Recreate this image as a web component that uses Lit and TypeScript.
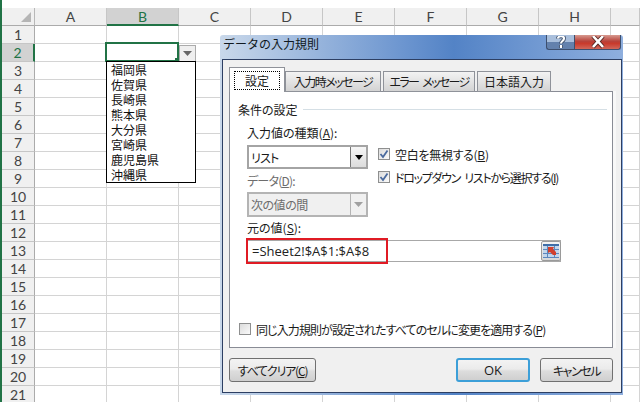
import { LitElement, html, css } from "lit";
import { customElement } from "lit/decorators.js";

const COLS = ["A", "B", "C", "D", "E", "F", "G", "H", ""];
const ROWS = Array.from({ length: 21 }, (_, i) => i + 1);
const ITEMS = ["福岡県", "佐賀県", "長崎県", "熊本県", "大分県", "宮崎県", "鹿児島県", "沖縄県"];

@customElement("app-root")
export class AppRoot extends LitElement {
  static styles = css`
    :host {
      display: block;
      position: relative;
      width: 640px;
      height: 402px;
      overflow: hidden;
      background: #fff;
      font-family: "Noto Sans CJK JP", "Noto Sans", sans-serif;
      font-size: 12px;
      font-feature-settings: "palt";
      color: #1a1a1a;
    }
    .sheet {
      display: grid;
      grid-template-columns: 33px repeat(8, 72px) 1fr;
      grid-auto-rows: 18px;
      margin-top: 8px;
      margin-left: 2px;
    }
    .strip { position: absolute; left: 0; top: 0; bottom: 0; width: 2px; background: #217346; }
    .corner { background: #f0f0f0; border-right: 1px solid #b8b8b8; border-bottom: 1px solid #ababab; position: relative; box-sizing: border-box; }
    .corner svg { position: absolute; left: 19px; top: 4px; }
    .ch {
      background: #f0f0f0; border-right: 1px solid #c6c6c6; border-bottom: 1px solid #ababab;
      box-sizing: border-box; display: flex; align-items: center; justify-content: center;
      font: 14px Lato, sans-serif; color: #444;
    }
    .ch.sel { background: #d2d2d2; color: #217346; border-bottom: 2px solid #217346; }
    .rh {
      background: #f0f0f0; border-right: 1px solid #ababab; border-bottom: 1px solid #c6c6c6;
      box-sizing: border-box; display: flex; align-items: center; justify-content: center;
      font: 14px Lato, sans-serif; color: #444;
    }
    .rh.sel { background: #d2d2d2; color: #217346; border-right: 2px solid #217346; }
    .c { border-right: 1px solid #d4d4d4; border-bottom: 1px solid #d4d4d4; box-sizing: border-box; }

    .cell-sel { position: absolute; left: 105px; top: 42px; width: 74px; height: 20px; box-sizing: border-box; border: 2px solid #217346; }
    .handle { position: absolute; right: -2px; bottom: -2px; width: 4px; height: 4px; background: #217346; }
    .dd { position: absolute; left: 179px; top: 45px; width: 17px; height: 17px; box-sizing: border-box; background: #efefef; border: 1px solid #ababab; display: flex; align-items: center; justify-content: center; }
    .list { position: absolute; left: 106px; top: 61px; width: 90px; height: 122px; box-sizing: border-box; border: 1px solid #000; background: #fff; padding: 0 0 0 4px; color: #111; }
    .list div { height: 15px; line-height: 15px; font-size: 12px; }

    .dialog {
      position: absolute; left: 220px; top: 35px; width: 403px; height: 360px; box-sizing: border-box;
      padding: 0 1px 2px 2px; border-radius: 3px 3px 0 0;
      background: linear-gradient(90deg, #c9d8ea 0%, #6d96d0 45%, #5383c6 58%, #8fafde 100%);
      display: flex; flex-direction: column;
    }
    .titlebar { height: 24px; flex: none; display: flex; align-items: flex-start; justify-content: space-between; }
    .title { font-size: 12px; line-height: 18px; margin-left: 1px; color: #101820; font-feature-settings: normal; }
    .caps { display: flex; margin-right: 1px; }
    .cap { height: 15px; box-sizing: border-box; border: 1px solid #3d4f6e; border-top: 0; display: flex; align-items: center; justify-content: center; overflow: hidden; }
    .help { width: 28px; border-radius: 0 0 0 3px; background: linear-gradient(#a9bfdc 0 50%, #6381ad 50% 100%); border-right: 0; }
    .close { width: 47px; border-radius: 0 0 3px 0; background: linear-gradient(#d79a90 0, #b8423a 45%, #c93a2c 60%, #d0675a 100%); }

    .body { flex: 1; border: 1px solid #2d3f63; background: #f0f0f0; padding: 8px 0 0 6px; display: flex; flex-direction: column; box-sizing: border-box; }
    .tabs { display: flex; height: 24px; align-items: flex-end; position: relative; z-index: 1; margin-bottom: -1px; }
    .tab {
      height: 21px; box-sizing: border-box; border: 1px solid #8f9299; white-space: nowrap; letter-spacing: -1.5px;
      background: linear-gradient(#f3f3f3, #d3d3d3); display: flex; align-items: center; justify-content: center; font-size: 12px;
    }
    .tab.on { height: 25px; background: #fff; border-bottom: 0; width: 56px; padding-top: 1px; letter-spacing: 0; }
    .focus { border: 1px dotted #000; width: 46px; height: 19px; box-sizing: border-box; display: flex; align-items: center; justify-content: center; }
    .t2 { width: 96px; } .t3 { width: 92px; margin-left: 2px; letter-spacing: -1.7px; word-spacing: 3px; } .t4 { width: 74px; margin-left: 2px; letter-spacing: 0; }
    .panel {
      width: 384px; height: 257px; box-sizing: border-box; border: 1px solid #898c95; background: #fff;
      box-shadow: 3px 0 0 #f8f8f8;
      padding: 10px 5px 11px 8px; display: flex; flex-direction: column;
    }
    .legend { display: flex; align-items: center; height: 14px; gap: 5px; flex: none; }
    .legend i { flex: 1; height: 1px; background: #d5dfe5; }
    .indent { padding-left: 9px; }
    .lbl { height: 16px; line-height: 16px; flex: none; }
    .lbl.first { margin-top: 9px; }
    .two { display: flex; gap: 10px; margin-top: 4px; flex: none; }
    .left { width: 121px; display: flex; flex-direction: column; }
    .right { display: flex; flex-direction: column; gap: 9px; padding-top: 2px; }
    .sel-box { height: 24px; box-sizing: border-box; border: 2px solid #a4a4a4; display: flex; align-items: center; justify-content: space-between; padding-left: 2px; background: #fff; letter-spacing: -0.8px; }
    .sel-box.dis { background: #f0f0f0; color: #6d6d6d; margin-top: 3px; height: 25px; border-color: #b4b4b4; letter-spacing: -0.5px; }
    .arrow { width: 16px; align-self: stretch; box-sizing: border-box; background: linear-gradient(#f6f6f6, #dcdcdc); border-left: 1px solid #777; display: flex; align-items: center; justify-content: center; }
    .dis .arrow { border-left-color: #b4b4b4; background: #f0f0f0; }
    .gray { color: #6d6d6d; margin-top: 4px; letter-spacing: -0.8px; }
    .check { display: flex; align-items: center; gap: 5px; height: 14px; white-space: nowrap; flex: none; }
    .box { width: 12px; height: 12px; box-sizing: border-box; border: 1px solid #8e8f8f; background: linear-gradient(135deg, #dcdcdc, #fafafa); display: flex; align-items: center; justify-content: center; flex: none; }
    .tight-s { letter-spacing: -0.3px; }
    .tight-l { letter-spacing: -1.3px; word-spacing: 3px; }
    .tight-m { letter-spacing: -0.9px; }
    .bottom-check { margin-top: auto; margin-left: 1px; }
    .src-lbl { margin-top: 3px; }
    .input {
      position: relative; width: 314px; height: 22px; margin-top: 4px; box-sizing: border-box; border: 1px solid #a8a8a8; display: flex; align-items: center;
      justify-content: space-between; padding-left: 4px; font: 13px "Open Sans", sans-serif; color: #222; background: #fff;
    }
    .red { position: absolute; left: -2px; top: -3px; width: 142px; height: 26px; box-sizing: border-box; border: 2px solid #e01b24; }
    .ref { width: 20px; height: 20px; box-sizing: border-box; border: 1px solid #9a9a9a; border-radius: 2px; background: linear-gradient(#f4f4f4, #d8d8d8); display: flex; align-items: center; justify-content: center; margin-right: -1px; }

    .footer { display: flex; margin-top: 10px; width: 384px; }
    .btn {
      height: 24px; box-sizing: border-box; border: 1px solid #707070; border-radius: 3px; display: flex; align-items: center; justify-content: center; white-space: nowrap;
      background: linear-gradient(#f3f3f3 0, #ebebeb 45%, #dddddd 55%, #cfcfcf 100%); font-size: 12px;
    }
    .clear { width: 87px; margin-right: auto; letter-spacing: -1.2px; }
    .ok { width: 74px; border: 2px solid #3c9fd8; margin-right: 10px; font: 13px "Open Sans", sans-serif; }
    .cancel { width: 73px; letter-spacing: -1.4px; }
    u { text-underline-offset: 1px; }
  `;

  render() {
    return html`
      <div class="sheet">
        <div class="corner"><svg width="11" height="11"><path d="M10 0V10H0Z" fill="#b5b5b5"/></svg></div>
        ${COLS.map((c) => html`<div class="ch ${c === "B" ? "sel" : ""}">${c}</div>`)}
        ${ROWS.map((r) => html`
          <div class="rh ${r === 2 ? "sel" : ""}">${r}</div>
          ${COLS.map(() => html`<div class="c"></div>`)}
        `)}
      </div>
      <div class="strip"></div>
      <div class="cell-sel"><div class="handle"></div></div>
      <div class="dd"><svg width="9" height="5"><path d="M0 0H9L4.5 5Z" fill="#666"/></svg></div>
      <div class="list">${ITEMS.map((i) => html`<div>${i}</div>`)}</div>

      <div class="dialog">
        <div class="titlebar">
          <div class="title">データの入力規則</div>
          <div class="caps">
            <div class="cap help"><svg width="10" height="13" viewBox="0 0 10 13"><path d="M2 2.5C2 -0.5 8 -0.5 8 2.5C8 5 5 5 5 7.5M5 9V12" fill="none" stroke="#3a4a64" stroke-width="3.8"/><path d="M2 2.5C2 -0.5 8 -0.5 8 2.5C8 5 5 5 5 7.5M5 9V12" fill="none" stroke="#fff" stroke-width="2.2"/></svg></div>
            <div class="cap close"><svg width="16" height="13" viewBox="0 0 16 13"><path d="M3 0L13 11M13 0L3 11" stroke="#5a2a26" stroke-width="4.2"/><path d="M3 0L13 11M13 0L3 11" stroke="#fff" stroke-width="2.6"/></svg></div>
          </div>
        </div>
        <div class="body">
          <div class="tabs">
            <div class="tab on"><div class="focus">設定</div></div>
            <div class="tab t2">入力時メッセージ</div>
            <div class="tab t3">エラー メッセージ</div>
            <div class="tab t4">日本語入力</div>
          </div>
          <div class="panel">
            <div class="legend"><span>条件の設定</span><i></i></div>
            <div class="indent">
              <div class="lbl first">入力値の種類(<u>A</u>):</div>
              <div class="two">
                <div class="left">
                  <div class="sel-box"><span>リスト</span><div class="arrow"><svg width="8" height="5"><path d="M0 0H8L4 5Z" fill="#000"/></svg></div></div>
                  <div class="lbl gray">データ(<u>D</u>):</div>
                  <div class="sel-box dis"><span>次の値の間</span><div class="arrow"><svg width="9" height="5"><path d="M0 0H9L4.5 5Z" fill="#a0a0a0"/></svg></div></div>
                </div>
                <div class="right">
                  <div class="check"><span class="box">${this.tick()}</span><span class="tight-s">空白を無視する(<u>B</u>)</span></div>
                  <div class="check"><span class="box">${this.tick()}</span><span class="tight-l">ドロップダウン リストから選択する(<u>I</u>)</span></div>
                </div>
              </div>
              <div class="lbl src-lbl">元の値(<u>S</u>):</div>
              <div class="input">
                <span>=Sheet2!$A$1:$A$8</span>
                <div class="red"></div>
                <div class="ref">
                  <svg width="16" height="14" viewBox="0 0 16 14">
                    <rect x="0" y="0" width="16" height="14" fill="#c3d6ec"/>
                    <rect x="0" y="0" width="16" height="2" fill="#3f6ea8"/>
                    <path d="M0 5.5H16M0 9.5H16M0 13.5H16M4.5 2V14M11.5 2V14" stroke="#5c88bd"/>
                    <path d="M5 3H11L10 5L13 8V11H10L7 8L5 9Z" fill="#d2402e"/>
                  </svg>
                </div>
              </div>
            </div>
            <div class="check bottom-check"><span class="box"></span><span class="tight-m">同じ入力規則が設定されたすべてのセルに変更を適用する(<u>P</u>)</span></div>
          </div>
          <div class="footer">
            <div class="btn clear"><span>すべてクリア(<u>C</u>)</span></div>
            <div class="btn ok">OK</div>
            <div class="btn cancel">キャンセル</div>
          </div>
        </div>
      </div>
    `;
  }

  tick() {
    return html`<svg width="10" height="10" viewBox="0 0 10 10"><path d="M1.5 5L4 8L8.5 1.5" fill="none" stroke="#4a6a9e" stroke-width="1.8"/></svg>`;
  }
}
